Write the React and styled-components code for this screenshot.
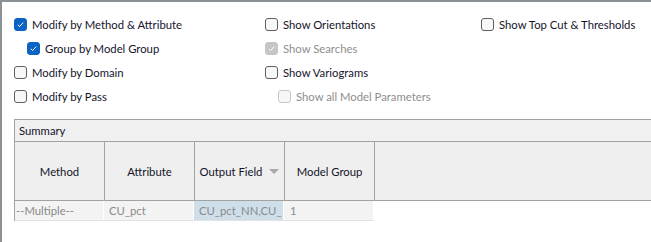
import React from 'react'
import styled, { createGlobalStyle } from 'styled-components'

const GlobalStyle = createGlobalStyle`
  html, body {
    margin: 0;
    padding: 0;
    background: #ffffff;
  }
`

const Frame = styled.div`
  width: 651px;
  height: 242px;
  box-sizing: border-box;
  border-top: 2px solid #8c9197;
  border-left: 2px solid #8c9197;
  background: #ffffff;
  overflow: hidden;
  font-family: Lato, "Liberation Sans", sans-serif;
  font-size: 11.3px;
  color: #14142b;
`

const OptionsGrid = styled.div`
  display: grid;
  grid-template-columns: 251px 216px 1fr;
  grid-auto-flow: column;
  grid-template-rows: repeat(4, 24px);
  padding: 10px 0 0 12px;
`

const Option = styled.label`
  display: flex;
  align-items: center;
  gap: 5px;
  padding-left: ${p => (p.$indent ? 13 : 0)}px;
  color: ${p => (p.$disabled ? '#8e8e8e' : '#14142b')};
  white-space: nowrap;
`

const Box = styled.span`
  width: 13px;
  height: 13px;
  box-sizing: border-box;
  border-radius: 3px;
  display: flex;
  align-items: center;
  justify-content: center;
  flex: none;
  background: ${p => (p.$checked ? (p.$disabled ? '#c6c6c6' : '#0b63c4') : '#f7f7f7')};
  border: 1px solid ${p => (p.$checked ? (p.$disabled ? '#c6c6c6' : '#0b63c4') : (p.$disabled ? '#c8c8c8' : '#5f5f5f'))};
`

const Check = ({ checked, disabled, children, indent }) => (
  <Option $indent={indent} $disabled={disabled}>
    <Box $checked={checked} $disabled={disabled}>
      {checked && (
        <svg width="9" height="9" viewBox="0 0 9 9">
          <path d="M1.8 4.8 L3.6 6.5 L7.2 2.6" fill="none" stroke="#ffffff" strokeWidth="1" />
        </svg>
      )}
    </Box>
    {children}
  </Option>
)

const Panel = styled.div`
  margin: 11px 0 0 12px;
  border-top: 1px solid #a2a2a2;
  border-left: 1px solid #a2a2a2;
`

const TitleBar = styled.div`
  height: 21px;
  line-height: 21px;
  padding-left: 4px;
  background: #f0f0f0;
  border-bottom: 1px solid #a2a2a2;
`

const HeaderRow = styled.div`
  display: flex;
  height: 58px;
  background: #efefef;
  border-bottom: 1px solid #a2a2a2;
`

const HeaderCell = styled.div`
  width: 89px;
  border-right: 1px solid #a2a2a2;
  display: flex;
  align-items: center;
  justify-content: center;
  gap: 7px;
  padding-top: 1px;
`

const SortArrow = styled.span`
  width: 0;
  height: 0;
  border-left: 5px solid transparent;
  border-right: 5px solid transparent;
  border-top: 5px solid #a8a8a8;
`

const DataRow = styled.div`
  display: flex;
  height: 19px;
  width: 359px;
  border-bottom: 1px solid #e2e2e2;
`

const DataCell = styled.div`
  width: ${p => p.$w}px;
  padding-left: ${p => p.$pad}px;
  box-sizing: border-box;
  background: ${p => (p.$selected ? '#cfdfea' : '#f3f3f3')};
  border-right: 1px solid #ffffff;
  color: #8a8a8a;
  line-height: 19px;
  white-space: nowrap;
  overflow: hidden;
`

export default function App () {
  return (
    <Frame>
      <GlobalStyle />
      <OptionsGrid>
        <Check checked>Modify by Method &amp; Attribute</Check>
        <Check checked indent>Group by Model Group</Check>
        <Check>Modify by Domain</Check>
        <Check>Modify by Pass</Check>
        <Check>Show Orientations</Check>
        <Check checked disabled>Show Searches</Check>
        <Check>Show Variograms</Check>
        <Check disabled indent>Show all Model Parameters</Check>
        <Check>Show Top Cut &amp; Thresholds</Check>
      </OptionsGrid>
      <Panel>
        <TitleBar>Summary</TitleBar>
        <HeaderRow>
          <HeaderCell>Method</HeaderCell>
          <HeaderCell>Attribute</HeaderCell>
          <HeaderCell>Output Field<SortArrow /></HeaderCell>
          <HeaderCell>Model Group</HeaderCell>
        </HeaderRow>
        <DataRow>
          <DataCell $w={89} $pad={1}>--Multiple--</DataCell>
          <DataCell $w={90} $pad={5}>CU_pct</DataCell>
          <DataCell $w={90} $pad={5} $selected>CU_pct_NN,CU_</DataCell>
          <DataCell $w={90} $pad={6}>1</DataCell>
        </DataRow>
      </Panel>
    </Frame>
  )
}
